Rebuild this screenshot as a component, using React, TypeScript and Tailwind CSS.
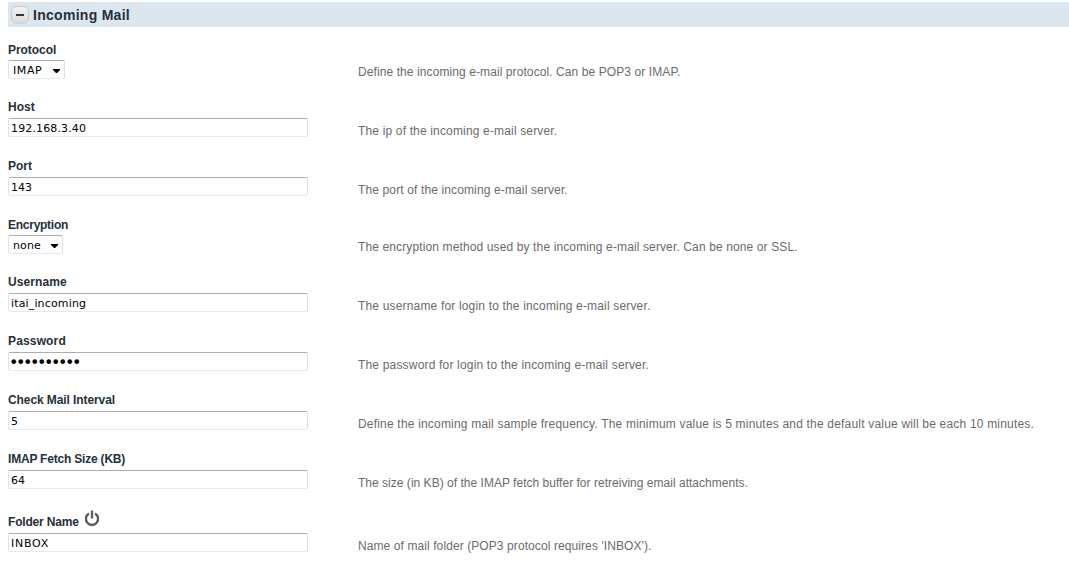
import React from 'react';

type Field = {
  label: string;
  value: string;
  hint: string;
  kind?: 'text' | 'password' | 'select';
  width?: string;
  track?: string;
  labelTrack?: string;
  valueTrack?: string;
  power?: boolean;
};

const fields: Field[] = [
  { label: 'Protocol', value: 'IMAP', kind: 'select', width: 'w-[57px]', labelTrack: 'tracking-[-0.06px]', valueTrack: 'tracking-[0.6px]', track: 'tracking-[0.09px]', hint: 'Define the incoming e-mail protocol. Can be POP3 or IMAP.' },
  { label: 'Host', value: '192.168.3.40', valueTrack: 'px-[2px] tracking-[0.13px]', track: 'tracking-[0.16px]', hint: 'The ip of the incoming e-mail server.' },
  { label: 'Port', value: '143', valueTrack: 'px-[2px]', track: 'tracking-[0.13px]', hint: 'The port of the incoming e-mail server.' },
  { label: 'Encryption', value: 'none', kind: 'select', width: 'w-[55px]', labelTrack: 'tracking-[-0.26px]', valueTrack: 'tracking-[0.15px]', track: 'tracking-[0.123px]', hint: 'The encryption method used by the incoming e-mail server. Can be none or SSL.' },
  { label: 'Username', value: 'itai_incoming', labelTrack: 'tracking-[0.1px]', valueTrack: 'px-[2px] tracking-[0.15px]', track: 'tracking-[0.17px]', hint: 'The username for login to the incoming e-mail server.' },
  { label: 'Password', value: '0123456789', kind: 'password', labelTrack: 'tracking-[0.15px]', valueTrack: 'px-0 text-[16px]! tracking-[-2.44px]', track: 'tracking-[0.18px]', hint: 'The password for login to the incoming e-mail server.' },
  { label: 'Check Mail Interval', value: '5', labelTrack: 'tracking-[-0.09px]', valueTrack: 'px-[2px]', track: 'tracking-[0.19px]', hint: 'Define the incoming mail sample frequency. The minimum value is 5 minutes and the default value will be each 10 minutes.' },
  { label: 'IMAP Fetch Size (KB)', value: '64', labelTrack: 'tracking-[-0.2px]', valueTrack: 'px-[2px]', track: 'tracking-[0.02px]', hint: 'The size (in KB) of the IMAP fetch buffer for retreiving email attachments.' },
  { label: 'Folder Name', value: 'INBOX', power: true, labelTrack: 'tracking-[-0.18px]', valueTrack: 'px-[2px] tracking-[0.75px]', track: 'tracking-[0.09px]', hint: "Name of mail folder (POP3 protocol requires 'INBOX')." },
];

const box =
  "h-[19px] appearance-none rounded-[2px] border border-[#e3e9ef] border-t-[#abadb3] border-l-[#e2e3ea] border-r-[#dbdfe6] bg-white pt-px font-['DejaVu_Sans',sans-serif] text-[11px] leading-[17px] text-black outline-none";

function PowerIcon() {
  return (
    <svg width="16" height="18" viewBox="0 0 16 18" fill="none" stroke="#5c5c5c" strokeWidth="2.3" className="ml-[5px] -mt-[7px]">
      <path d="M5 3.6A6.1 6.1 0 1 0 11 3.6" />
      <path d="M8 0.5V8.5" />
    </svg>
  );
}

function Row({ f }: { f: Field }) {
  const select = f.kind === 'select';
  return (
    <div className={`flex ${select ? 'h-[57px]' : 'h-[59px]'} ${f.power ? 'pt-1' : ''}`}>
      <div className="w-[350px] shrink-0">
        <div className={`flex h-[15px] items-center text-[12px] leading-[15px] font-bold whitespace-nowrap text-[#25303b] ${select ? 'mb-[2px]' : 'mb-[3px]'}`}>
          <span className={f.labelTrack}>{f.label}</span>
          {f.power && <PowerIcon />}
        </div>
        {select ? (
          <div className={`${box} ${f.width} flex items-center justify-between pr-1 pl-1`}>
            <span className={f.valueTrack}>{f.value}</span>
            <svg width="7" height="4" viewBox="0 0 7 4" className="mt-px"><path d="M0 0H7V1L4 4H3L0 1Z" fill="#000" /></svg>
          </div>
        ) : (
          <input type={f.kind ?? 'text'} defaultValue={f.value} aria-label={f.label} className={`${box} block w-[300px] ${f.valueTrack}`} />
        )}
      </div>
      <p className={`${select ? 'mt-[22px]' : 'mt-6'} text-[12px] leading-[15px] whitespace-nowrap text-[#6b6b6b]`}>
        <span className={f.track}>{f.hint}</span>
      </p>
    </div>
  );
}

export default function App() {
  return (
    <main className="h-[568px] overflow-hidden bg-white pt-[2px] pl-2 font-['Liberation_Sans',Arial,sans-serif]">
      <header className="mb-4 flex h-[25px] items-center bg-[#dce6ee] pl-[3px]">
        <svg width="18" height="18" viewBox="0 0 18 18">
          <defs>
            <linearGradient id="toggle" x1="0" y1="0" x2="0" y2="1">
              <stop offset="0" stopColor="#f3f3f3" />
              <stop offset="1" stopColor="#dadada" />
            </linearGradient>
          </defs>
          <rect x="0.5" y="0.5" width="17" height="16.5" rx="5" fill="url(#toggle)" stroke="#c9c9c9" />
          <path d="M5 9H13" stroke="#333" strokeWidth="2" />
        </svg>
        <h1 className="ml-1 text-[14px] leading-[18px] font-bold tracking-[0.28px] text-[#25303b]">Incoming Mail</h1>
      </header>
      {fields.map((f) => <Row key={f.label} f={f} />)}
    </main>
  );
}
